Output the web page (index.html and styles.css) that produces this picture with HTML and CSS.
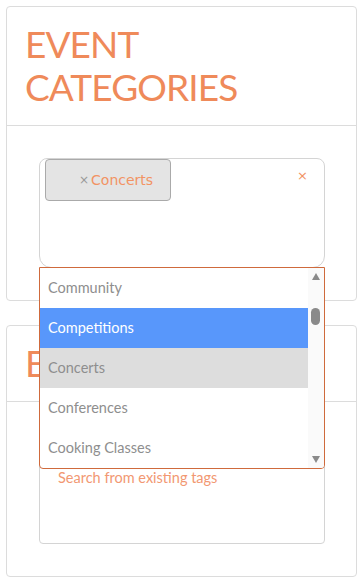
FILE: index.html
```html
<!DOCTYPE html>
<html>
<head>
<meta charset="utf-8">
<link rel="stylesheet" href="styles.css">
</head>
<body>
<div class="card">
  <div class="card-header"><h2 class="title">EVENT CATEGORIES</h2></div>
  <div class="card-body">
    <div class="select">
      <div class="selection">
        <span class="chip"><span class="chip-x">×</span><span class="chip-label">Concerts</span></span>
        <span class="clear">×</span>
      </div>
      <div class="dropdown">
        <ul class="options">
          <li class="option">Community</li>
          <li class="option highlighted">Competitions</li>
          <li class="option selected">Concerts</li>
          <li class="option">Conferences</li>
          <li class="option">Cooking Classes</li>
        </ul>
        <div class="scrollbar">
          <span class="arrow up"></span>
          <span class="thumb"></span>
          <span class="arrow down"></span>
        </div>
      </div>
    </div>
  </div>
</div>
<div class="card">
  <div class="card-header"><h2 class="title">EVENT TAGS</h2></div>
  <div class="card-body">
    <div class="tagbox">
      <span class="placeholder">Search from existing tags</span>
    </div>
  </div>
</div>
</body>
</html>
```

FILE: styles.css
```css
* { box-sizing: border-box; }
html, body { margin: 0; padding: 0; background: #fff; }
body {
  padding: 6px 6px;
  font-family: Lato, "Open Sans", sans-serif;
  width: 363px;
  height: 582px;
  overflow: hidden;
}
.card {
  border: 1px solid #dcdcdc;
  border-radius: 4px;
  background: #fff;
  margin-bottom: 24px;
}
.card-header {
  border-bottom: 1px solid #dcdcdc;
  padding: 15px 18px 17px;
}
.title {
  margin: 0;
  font-weight: 400;
  font-size: 37px;
  line-height: 43px;
  color: #ef8a5a;
  letter-spacing: -0.9px;
}
.card-body {
  padding: 32px 31px 32px 32px;
}
.select { position: relative; }
.selection {
  height: 110px;
  border: 1px solid #d4d4d4;
  border-radius: 8px 8px 12px 12px;
  position: relative;
  padding: 0 5px;
}
.chip {
  display: inline-flex;
  align-items: center;
  justify-content: flex-start;
  width: 126px;
  height: 42px;
  background: #e4e4e4;
  border: 1px solid #aaa;
  border-radius: 4px;
  font-family: "DejaVu Sans", sans-serif;
  font-size: 14px;
  padding: 0 0 1px 33px;
}
.chip-x { color: #999; margin-right: 2px; font-size: 12px; }
.chip-label { color: #f29363; }
.clear {
  position: absolute;
  right: 16px;
  top: 9px;
  color: #f29363;
  font-family: "DejaVu Sans", sans-serif;
  font-size: 13px;
}
.dropdown {
  position: absolute;
  z-index: 10;
  left: 0;
  right: 0;
  top: 109px;
  height: 202px;
  border: 1px solid #cf6a3c;
  border-radius: 0 0 4px 4px;
  background: #fff;
  display: flex;
  overflow: hidden;
}
.options {
  list-style: none;
  margin: 0;
  padding: 0;
  flex: 1;
}
.option {
  height: 40px;
  line-height: 40px;
  padding-left: 8px;
  font-size: 14.5px;
  color: #8e8e8e;
}
.option.highlighted { background: #5897fb; color: #fff; }
.option.selected { background: #dddddd; }
.scrollbar {
  width: 16px;
  background: #fafafa;
  position: relative;
}
.arrow {
  position: absolute;
  left: 4px;
  width: 0; height: 0;
  border-left: 4px solid transparent;
  border-right: 4px solid transparent;
}
.arrow.up { top: 5px; border-bottom: 7px solid #8a8a8a; }
.arrow.down { bottom: 5px; border-top: 7px solid #8a8a8a; }
.thumb {
  position: absolute;
  left: 3px;
  top: 40px;
  width: 9px;
  height: 17px;
  border-radius: 5px;
  background: #8a8a8a;
}
.tagbox {
  height: 110px;
  border: 1px solid #d4d4d4;
  border-radius: 4px;
  padding: 32px 0 0 18px;
}
.placeholder {
  font-size: 14.5px;
  color: #f29872;
}
```
